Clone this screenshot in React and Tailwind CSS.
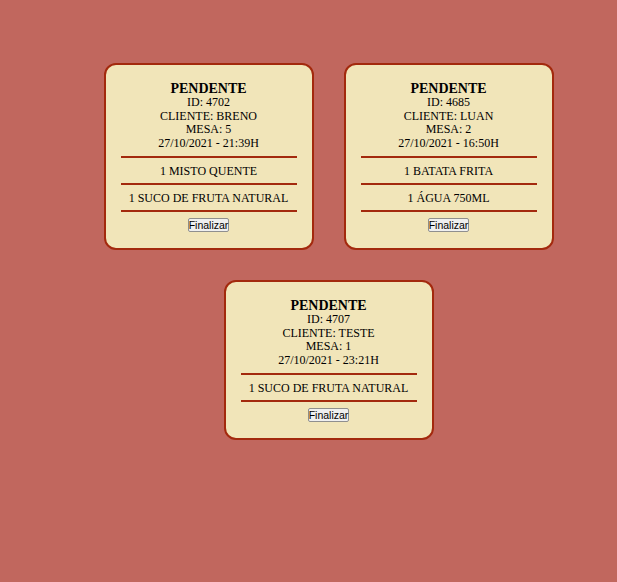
import React from "react";

const orders = [
  {
    id: 4702,
    client: "BRENO",
    table: 5,
    date: "27/10/2021 - 21:39H",
    items: ["1 MISTO QUENTE", "1 SUCO DE FRUTA NATURAL"],
  },
  {
    id: 4685,
    client: "LUAN",
    table: 2,
    date: "27/10/2021 - 16:50H",
    items: ["1 BATATA FRITA", "1 ÁGUA 750ML"],
  },
  {
    id: 4707,
    client: "TESTE",
    table: 1,
    date: "27/10/2021 - 23:21H",
    items: ["1 SUCO DE FRUTA NATURAL"],
  },
];

const OrderCard = ({ order }) => {
  return (
    <li className="m-[15px] w-[210px] rounded-[12px] border-2 border-[#a3290d] bg-[#f1e5b9] p-[15px] text-center text-[12px] leading-[13.7px] text-black">
      <h2 className="pt-[1px] -mb-[1px] text-[14px] leading-[16px] font-bold">PENDENTE</h2>
      <p>ID: {order.id}</p>
      <p>CLIENTE: {order.client}</p>
      <p>MESA: {order.table}</p>
      <p>{order.date}</p>
      <ul className="mt-[5.5px] border-b-2 border-[#a3290d]">
        {order.items.map((item) => (
          <li key={item} className="border-t-2 border-[#a3290d] pt-[7px] pb-[5px] leading-[13px]">
            {item}
          </li>
        ))}
      </ul>
      <button className="mt-[6px] border border-[#8f8f8f] bg-[#efefef] px-0 text-[10.5px] leading-[12px] font-['Liberation_Sans',sans-serif] rounded-[2px]">
        Finalizar
      </button>
    </li>
  );
};

export default function App() {
  return (
    <div className="min-h-[582px] bg-[#c1675e] font-['Liberation_Serif',serif]">
      {/* order list */}
      <ul className="flex flex-wrap justify-center pl-[40px] pt-[48px]">
        {orders.map((order) => (
          <OrderCard key={order.id} order={order} />
        ))}
      </ul>
    </div>
  );
}
